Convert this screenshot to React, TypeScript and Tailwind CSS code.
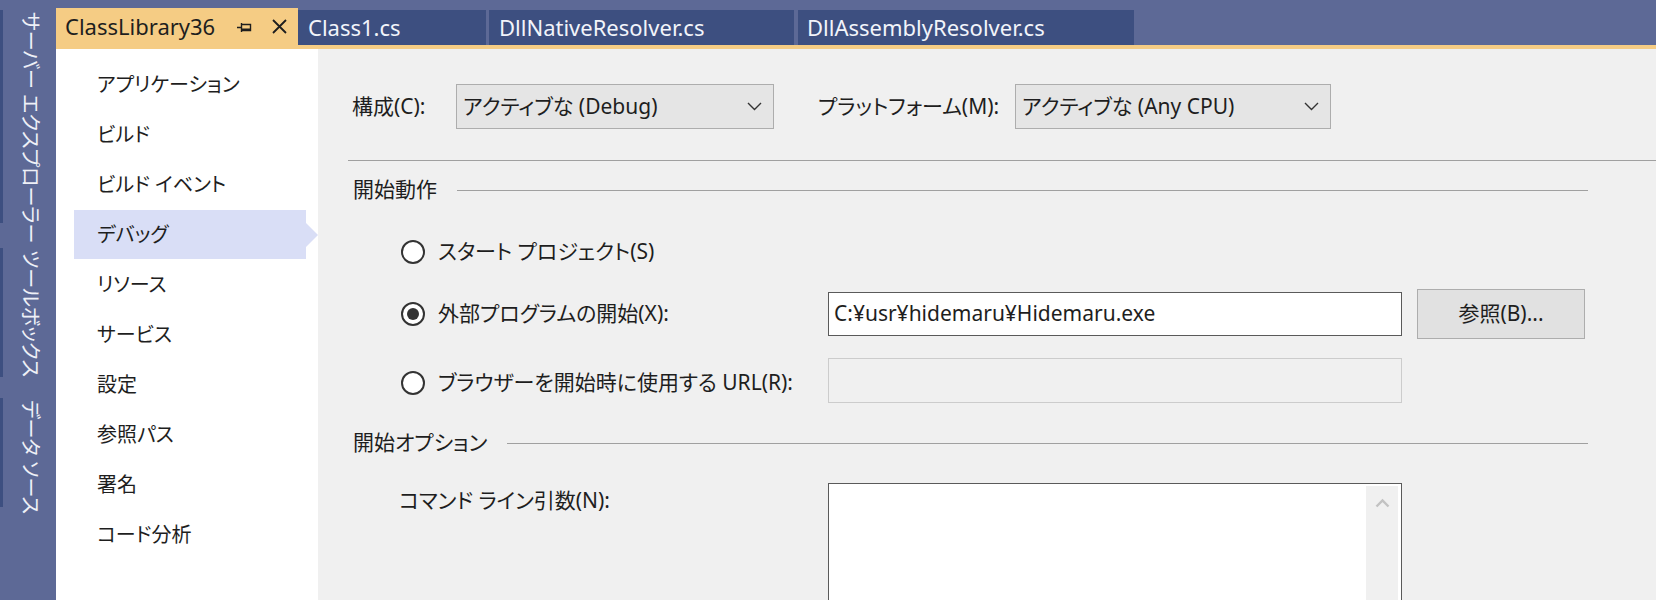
const JP = "font-['Noto_Sans','Noto_Sans_CJK_JP',sans-serif] [font-feature-settings:'palt']"

const SIDE_ITEMS = [
  'アプリケーション',
  'ビルド',
  'ビルド イベント',
  'デバッグ',
  'リソース',
  'サービス',
  '設定',
  '参照パス',
  '署名',
  'コード分析',
]

const VERTICAL_TABS = [
  { label: 'サーバー エクスプローラー', h: 'h-[213px]', mt: 'mt-[10px]' },
  { label: 'ツールボックス', h: 'h-[129px]', mt: 'mt-[25px]' },
  { label: 'データ ソース', h: 'h-[109px]', mt: 'mt-[21px]' },
]

function Chevron() {
  return (
    <svg width="15" height="9" viewBox="0 0 15 9">
      <path d="M1 1 L7.5 7.5 L14 1" fill="none" stroke="#333333" strokeWidth="1.4" />
    </svg>
  )
}

function ChevronUp() {
  return (
    <svg width="15" height="10" viewBox="0 0 15 10">
      <path d="M1.5 8.5 L7.5 2.5 L13.5 8.5" fill="none" stroke="#c2c2c2" strokeWidth="2.4" />
    </svg>
  )
}

function Dropdown({ value, width }: { value: string; width: string }) {
  return (
    <div
      className={`${width} h-[45px] bg-[#e5e5e5] border border-[#adadad] flex items-center justify-between pl-[6px] pr-[11px]`}
    >
      <span>{value}</span>
      <Chevron />
    </div>
  )
}

function Radio({ checked }: { checked?: boolean }) {
  return (
    <span className="w-[24px] h-[24px] rounded-full border-[2px] border-[#333333] bg-white flex items-center justify-center shrink-0">
      {checked && <span className="w-[12px] h-[12px] rounded-full bg-[#333333]" />}
    </span>
  )
}

function SectionHeader({ title }: { title: string }) {
  return (
    <div className="flex items-center h-[30px] pl-[5px] pr-[68px]">
      <span>{title}</span>
      <div className="flex-1 h-px bg-[#a0a0a0] ml-[20px]" />
    </div>
  )
}

function PinIcon() {
  return (
    <svg width="16" height="11" viewBox="0 0 16 11">
      <path d="M0 5.5 H4 M4.5 1 V10 M4.5 2.5 H13.5 V8.5 H4.5" fill="none" stroke="#1e1e1e" strokeWidth="1.4" />
      <path d="M4.5 7.5 H13.5" stroke="#1e1e1e" strokeWidth="2" />
    </svg>
  )
}

function CloseIcon() {
  return (
    <svg width="15" height="15" viewBox="0 0 15 15">
      <path d="M1 1 L14 14 M14 1 L1 14" stroke="#1e1e1e" strokeWidth="1.8" />
    </svg>
  )
}

export default function App() {
  return (
    <div className={`w-[1656px] h-[600px] overflow-hidden bg-[#5d6996] flex text-[#1e1e1e] text-[21px] ${JP}`}>
      {/* 左の縦タブ */}
      <div className="w-[56px] shrink-0 flex flex-col">
        {VERTICAL_TABS.map((t) => (
          <div key={t.label} className={`${t.h} ${t.mt} flex`}>
            <div className="w-[3px] bg-[#3d4f80]" />
            <div className="flex-1 flex justify-center pt-[2px]">
              <span className="[writing-mode:vertical-rl] [text-orientation:sideways] text-[#eef0f7] text-[20px] leading-[22px] whitespace-nowrap">
                {t.label}
              </span>
            </div>
          </div>
        ))}
      </div>

      <div className="flex-1 flex flex-col">
        {/* ドキュメント タブ */}
        <div className="h-[45px] flex items-end shrink-0 text-[22px]">
          <div className="w-[242px] h-[37px] bg-[#f5cc84] flex items-center pl-[9px] pr-[11px] text-[#1e1e1e]">
            <span className="flex-1">ClassLibrary36</span>
            <span className="mr-[19px] mt-[2px] flex"><PinIcon /></span>
            <span className="flex"><CloseIcon /></span>
          </div>
          <div className="w-[188px] h-[35px] bg-[#3d4f80] flex items-center pl-[10px] text-[#f2f4fa]">Class1.cs</div>
          <div className="w-[305px] h-[35px] bg-[#3d4f80] flex items-center pl-[10px] text-[#f2f4fa] ml-[3px]">DllNativeResolver.cs</div>
          <div className="w-[336px] h-[35px] bg-[#3d4f80] flex items-center pl-[9px] text-[#f2f4fa] ml-[4px]">DllAssemblyResolver.cs</div>
        </div>
        <div className="h-[4px] bg-[#f5cc84] shrink-0" />

        <div className="flex-1 flex">
          {/* ページ一覧 */}
          <div className="w-[262px] shrink-0 bg-white pt-[11px] text-[20px]">
            {SIDE_ITEMS.map((item) => {
              const active = item === 'デバッグ'
              return (
                <div key={item} className="h-[50px] flex items-center relative">
                  {active && (
                    <>
                      <div className="absolute left-[18px] right-[12px] top-0 bottom-px bg-[#d9def6]" />
                      <div className="absolute right-0 top-[13px] w-0 h-0 border-y-[12px] border-y-transparent border-l-[12px] border-l-[#d9def6]" />
                    </>
                  )}
                  <span className="relative pl-[41px] whitespace-pre">{item}</span>
                </div>
              )
            })}
          </div>

          {/* デバッグ設定 */}
          <div className="flex-1 bg-[#f0f0f0] pl-[30px] pt-[35px]">
            <div className="flex items-center h-[45px] pl-[4px]">
              <span className="w-[104px]">構成(C):</span>
              <Dropdown value="アクティブな (Debug)" width="w-[318px]" />
              <span className="w-[197px] ml-[44px]">プラットフォーム(M):</span>
              <Dropdown value="アクティブな (Any CPU)" width="w-[316px]" />
            </div>

            <div className="h-px bg-[#a0a0a0] mt-[31px]" />

            <div className="mt-[14px]">
              <SectionHeader title="開始動作" />
            </div>

            <div className="flex items-center h-[50px] mt-[22px] pl-[53px]">
              <Radio />
              <span className="ml-[13px]">スタート プロジェクト(S)</span>
            </div>

            <div className="flex items-center h-[50px] mt-[12px]">
              <div className="w-[480px] flex items-center pl-[53px]">
                <Radio checked />
                <span className="ml-[13px]">外部プログラムの開始(X):</span>
              </div>
              <div className="w-[574px] h-[44px] bg-white border border-[#5a5a5a] flex items-center pl-[5px]">
                C:¥usr¥hidemaru¥Hidemaru.exe
              </div>
              <button className="w-[168px] h-[50px] ml-[15px] bg-[#e1e1e1] border border-[#adadad] flex items-center justify-center">
                参照(B)...
              </button>
            </div>

            <div className="flex items-center h-[45px] mt-[19px]">
              <div className="w-[480px] flex items-center pl-[53px] pt-[4px]">
                <Radio />
                <span className="ml-[13px]">ブラウザーを開始時に使用する URL(R):</span>
              </div>
              <div className="w-[574px] h-[45px] bg-[#f0f0f0] border border-[#cccccc]" />
            </div>

            <div className="mt-[25px]">
              <SectionHeader title="開始オプション" />
            </div>

            <div className="flex items-start mt-[25px]">
              <div className="w-[480px] pl-[51px] pt-[2px] leading-[30px]">コマンド ライン引数(N):</div>
              <div className="w-[574px] h-[140px] bg-white border border-[#5a5a5a] flex justify-end pt-[2px] pr-[3px]">
                <div className="w-[32px] bg-[#f0f0f0] flex justify-center pt-[12px]">
                  <ChevronUp />
                </div>
              </div>
            </div>
          </div>
        </div>
      </div>
    </div>
  )
}
